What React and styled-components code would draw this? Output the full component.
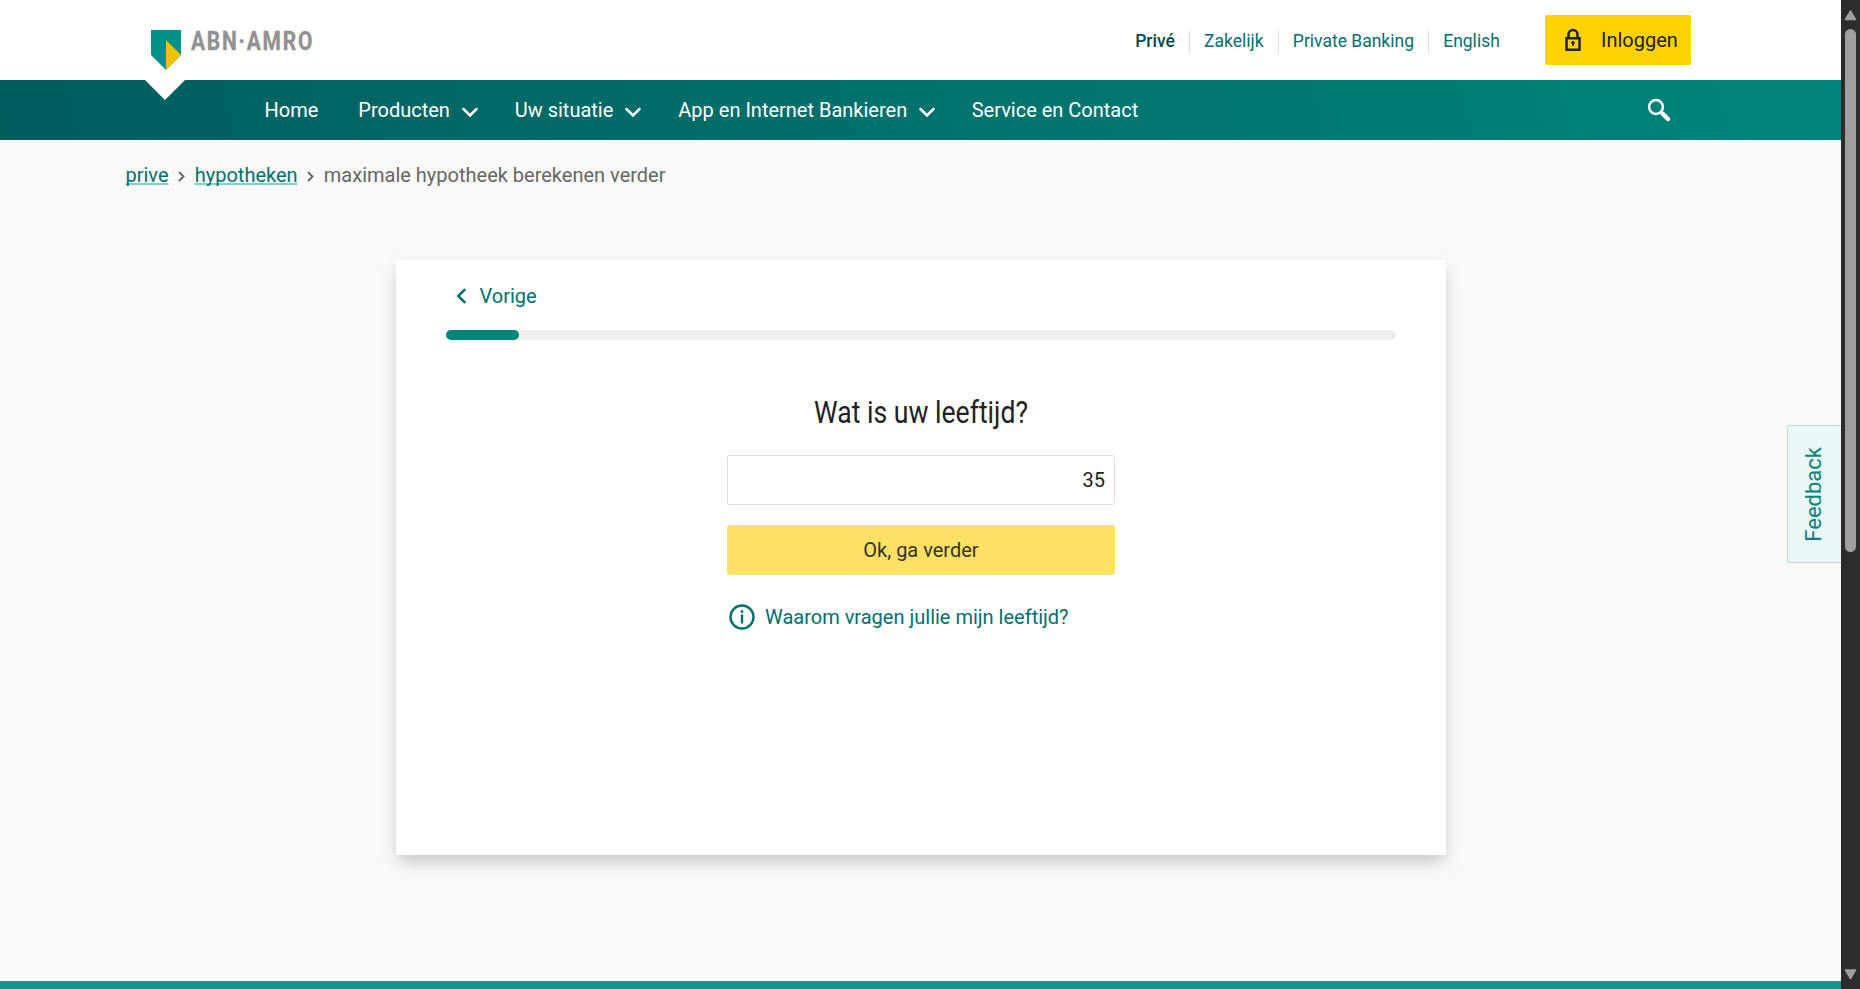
import React from "react";
import styled, { createGlobalStyle } from "styled-components";

const Global = createGlobalStyle`
  *, *::before, *::after { box-sizing: border-box; }
  html, body { margin: 0; height: 100%; overflow: hidden; }
  body { font-family: Roboto, "Liberation Sans", sans-serif; font-size: 20px; color: #222; background: #f9f9f9; }
  button, input { font: inherit; }
  a { color: inherit; text-decoration: none; }
`;

const Window = styled.div`
  display: flex;
  width: 1860px;
  height: 989px;
  overflow: hidden;
`;

const Page = styled.div`
  position: relative;
  display: flex;
  flex-direction: column;
  width: 1841px;
  background: #f9f9f9;
`;

const TopBar = styled.header`
  display: flex;
  align-items: flex-start;
  height: 80px;
  padding: 15px 150px 0 151px;
  background: #fff;
`;

const Logo = styled.svg`
  display: block;
  margin: 15px auto 0 0;
  overflow: visible;
`;

const SiteLinks = styled.nav`
  display: flex;
  align-items: center;
  height: 50px;
  padding-top: 3px;
  margin-right: 31px;
`;

const SiteLink = styled.a`
  display: flex;
  align-items: center;
  height: 23px;
  padding: 0 14.2px 2px 14px;
  font-size: 17.5px;
  color: ${(p) => (p.$active ? "#004c4c" : "#00716b")};
  font-weight: ${(p) => (p.$active ? 500 : 400)};
  & + & { border-left: 1px solid #dedede; }
`;

const LoginButton = styled.button`
  display: flex;
  align-items: center;
  gap: 16px;
  width: 146px;
  height: 50px;
  padding: 0 0 0 16px;
  border: 0;
  border-radius: 2px;
  background: #ffd200;
  color: #222;
  font-size: 20px;
`;

const NavBar = styled.nav`
  position: relative;
  display: flex;
  align-items: center;
  height: 60px;
  padding: 0 169px 0 264.5px;
  background: linear-gradient(75deg, #005e5d 0%, #00857a 100%);
`;

const Notch = styled.svg`
  position: absolute;
  left: 145px;
  top: 0;
`;

const NavItem = styled.a`
  display: flex;
  align-items: center;
  gap: 12px;
  margin-right: ${(p) => p.$gap || 40}px;
  color: #fff;
  font-size: 20px;
  svg { margin-top: 5px; }
`;

const SearchIcon = styled.svg`
  margin-left: auto;
`;

const Crumbs = styled.div`
  display: flex;
  align-items: center;
  height: 70px;
  padding: 0 0 0 125.5px;
  font-size: 20px;
  color: #666;
  svg { margin: 3px 9.6px 0; }
`;

const CrumbLink = styled.a`
  color: #00716b;
  text-decoration: underline;
  text-decoration-color: #80cfc9;
  text-decoration-thickness: 2px;
  text-underline-offset: 1px;
  text-decoration-skip-ink: none;
`;

const Card = styled.main`
  width: 1050px;
  height: 595px;
  margin: 50px 0 0 396px;
  padding: 20px 50px 0;
  background: #fff;
  box-shadow: 0 8px 16px -2px rgba(0, 0, 0, 0.22);
`;

const BackLink = styled.a`
  display: flex;
  align-items: center;
  gap: 12.5px;
  height: 32px;
  padding-left: 10px;
  color: #00716b;
`;

const Track = styled.div`
  height: 10px;
  margin-top: 18px;
  border-radius: 5px;
  background: #efefef;
`;

const Progress = styled.div`
  width: 73px;
  height: 10px;
  border-radius: 5px;
  background: #00857a;
`;

const Form = styled.form`
  display: flex;
  flex-direction: column;
  width: 388px;
  margin: 51px auto 0;
`;

const Question = styled.h1`
  display: flex;
  justify-content: center;
  margin: 0 0 20px;
  height: 44px;
`;

const AgeInput = styled.input`
  height: 50px;
  padding: 0 9px;
  border: 1px solid #dedede;
  border-radius: 2px;
  background: #fff;
  color: #222;
  text-align: right;
  outline: 0;
`;

const SubmitButton = styled.button`
  height: 50px;
  margin-top: 20px;
  border: 0;
  border-radius: 2px;
  background: #ffe164;
  color: #333;
`;

const InfoLink = styled.a`
  display: flex;
  align-items: center;
  gap: 10px;
  height: 30px;
  margin: 27px 0 0 2px;
  color: #00716b;
  white-space: nowrap;
`;

const Footer = styled.footer`
  height: 8px;
  margin-top: auto;
  background: #19938c;
`;

const Feedback = styled.button`
  position: absolute;
  right: 0;
  top: 425px;
  display: flex;
  align-items: center;
  justify-content: center;
  width: 54px;
  height: 138px;
  padding: 0 2px 0 0;
  border: 1px solid #bcd5d3;
  border-right: 0;
  border-radius: 2px 0 0 2px;
  background: #ebf6f7;
  color: #00857a;
  font-size: 22px;
  span { writing-mode: vertical-rl; transform: rotate(180deg); }
`;

const Scrollbar = styled.div`
  display: flex;
  flex-direction: column;
  align-items: center;
  justify-content: space-between;
  width: 19px;
  padding: 10px 0 9px;
  background: #2c2c2c;
`;

const Thumb = styled.div`
  width: 11px;
  height: 523px;
  margin: 8px 0 auto;
  border-radius: 6px;
  background: #9f9f9f;
`;

const ChevronDown = () => (
  <svg width="16" height="11" viewBox="0 0 16 11" fill="none">
    <path d="M1.5 2 8 8.5 14.5 2" stroke="#fff" strokeWidth="2.5" strokeLinecap="round" />
  </svg>
);

const CrumbChevron = () => (
  <svg width="7" height="11" viewBox="0 0 7 11" fill="none">
    <path d="M1 1 5.5 5.5 1 10" stroke="#666" strokeWidth="1.9" />
  </svg>
);

const Arrow = ({ down }) => (
  <svg width="13" height="11" viewBox="0 0 13 11">
    <path d={down ? "M1.5 1h10l-5 8.5z" : "M1.5 9.5h10l-5-8.5z"} fill="#9f9f9f" stroke="#9f9f9f" strokeWidth="1.5" strokeLinejoin="round" />
  </svg>
);

export default function App() {
  return (
    <Window>
      <Global />
      <Page>
        <TopBar>
          <Logo width="200" height="41" viewBox="0 0 200 41">
            <path d="M0 0H30V25L15 40 0 25Z" fill="#009286" />
            <path d="M15 10 30 25 15 40Z" fill="#f3c000" />
            <g transform="translate(40 0) scale(0.84 1)">
              <text x="0" y="20.3" fontFamily="Roboto" fontSize="25" fontWeight="700" fill="#929292" stroke="#929292" strokeWidth="0.4" textLength="144.5" lengthAdjust="spacing">ABN·AMRO</text>
            </g>
          </Logo>
          <SiteLinks>
            <SiteLink $active>Privé</SiteLink>
            <SiteLink>Zakelijk</SiteLink>
            <SiteLink>Private Banking</SiteLink>
            <SiteLink>English</SiteLink>
          </SiteLinks>
          <LoginButton>
            <svg width="24" height="26" viewBox="0 0 24 26" fill="none">
              <path d="M7.5 11V7.5a4.5 4.5 0 0 1 9 0V11" stroke="#222" strokeWidth="2.5" />
              <path d="M5.5 11.2h13v11.5h-13z" stroke="#222" strokeWidth="2.5" />
              <circle cx="12" cy="15.8" r="1.8" fill="#222" />
              <path d="M12 16v3" stroke="#222" strokeWidth="1.6" />
            </svg>
            Inloggen
          </LoginButton>
        </TopBar>
        <NavBar>
          <Notch width="40" height="20" viewBox="0 0 40 20"><path d="M0 0H40L20 20Z" fill="#fff" /></Notch>
          <NavItem>Home</NavItem>
          <NavItem $gap={36.8}>Producten <ChevronDown /></NavItem>
          <NavItem $gap={37}>Uw situatie <ChevronDown /></NavItem>
          <NavItem $gap={36.5}>App en Internet Bankieren <ChevronDown /></NavItem>
          <NavItem>Service en Contact</NavItem>
          <SearchIcon width="26" height="26" viewBox="0 0 26 26" fill="none">
            <circle cx="10" cy="10" r="6.9" stroke="#fff" strokeWidth="2.5" />
            <path d="M14.5 15 17 17.5" stroke="#fff" strokeWidth="2.5" />
            <path d="m17 17 5 5" stroke="#fff" strokeWidth="4.5" strokeLinecap="round" />
          </SearchIcon>
        </NavBar>
        <Crumbs>
          <CrumbLink>prive</CrumbLink>
          <CrumbChevron />
          <CrumbLink>hypotheken</CrumbLink>
          <CrumbChevron />
          <span>maximale hypotheek berekenen verder</span>
        </Crumbs>
        <Card>
          <BackLink>
            <svg width="11" height="16" viewBox="0 0 11 16" fill="none">
              <path d="M8.5 1.8 2.3 8l6.2 6.2" stroke="#00716b" strokeWidth="2.6" strokeLinecap="round" />
            </svg>
            Vorige
          </BackLink>
          <Track><Progress /></Track>
          <Form onSubmit={(e) => e.preventDefault()}>
            <Question>
              <svg width="300" height="44" viewBox="0 0 300 44">
                <text x="43" y="32" fontFamily="Roboto" fontSize="32" fontWeight="400" fill="#222" textLength="214" lengthAdjust="spacingAndGlyphs">Wat is uw leeftijd?</text>
              </svg>
            </Question>
            <AgeInput defaultValue="35" />
            <SubmitButton>Ok, ga verder</SubmitButton>
            <InfoLink>
              <svg width="26" height="26" viewBox="0 0 26 26" fill="none">
                <circle cx="13" cy="13" r="11.5" stroke="#00716b" strokeWidth="2.4" />
                <circle cx="13" cy="7.5" r="1.4" fill="#00716b" />
                <path d="M13 11.5v7" stroke="#00716b" strokeWidth="2.4" strokeLinecap="round" />
              </svg>
              Waarom vragen jullie mijn leeftijd?
            </InfoLink>
          </Form>
        </Card>
        <Footer />
        <Feedback><span>Feedback</span></Feedback>
      </Page>
      <Scrollbar>
        <Arrow />
        <Thumb />
        <Arrow down />
      </Scrollbar>
    </Window>
  );
}
